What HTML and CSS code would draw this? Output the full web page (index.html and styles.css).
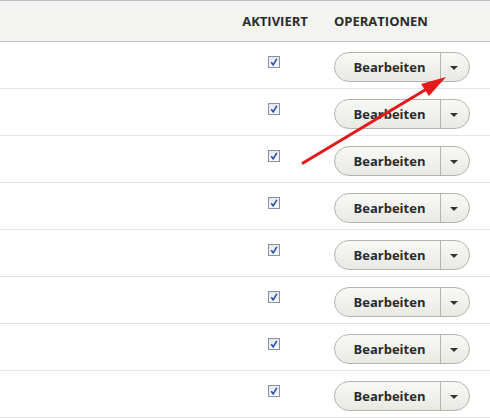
FILE: index.html
```html
<!DOCTYPE html>
<html>
<head>
<meta charset="utf-8">
<link rel="stylesheet" href="styles.css">
</head>
<body>
<div class="wrap">
<table class="list">
  <thead>
    <tr>
      <th class="c-name"></th>
      <th class="c-on">Aktiviert</th>
      <th class="c-ops">Operationen</th>
    </tr>
  </thead>
  <tbody>
    <tr><td class="c-name"></td><td class="c-on"><span class="cb"><svg viewBox="0 0 12 12" width="12" height="12"><path d="M3.2 6.2 L5.2 8.8 L8.8 2.8" fill="none" stroke="#2a4fa8" stroke-width="1.6"/></svg></span></td><td class="c-ops"><div class="drop"><span class="main">Bearbeiten</span><span class="tog"><i class="tri"></i></span></div></td></tr>
    <tr><td class="c-name"></td><td class="c-on"><span class="cb"><svg viewBox="0 0 12 12" width="12" height="12"><path d="M3.2 6.2 L5.2 8.8 L8.8 2.8" fill="none" stroke="#2a4fa8" stroke-width="1.6"/></svg></span></td><td class="c-ops"><div class="drop"><span class="main">Bearbeiten</span><span class="tog"><i class="tri"></i></span></div></td></tr>
    <tr><td class="c-name"></td><td class="c-on"><span class="cb"><svg viewBox="0 0 12 12" width="12" height="12"><path d="M3.2 6.2 L5.2 8.8 L8.8 2.8" fill="none" stroke="#2a4fa8" stroke-width="1.6"/></svg></span></td><td class="c-ops"><div class="drop"><span class="main">Bearbeiten</span><span class="tog"><i class="tri"></i></span></div></td></tr>
    <tr><td class="c-name"></td><td class="c-on"><span class="cb"><svg viewBox="0 0 12 12" width="12" height="12"><path d="M3.2 6.2 L5.2 8.8 L8.8 2.8" fill="none" stroke="#2a4fa8" stroke-width="1.6"/></svg></span></td><td class="c-ops"><div class="drop"><span class="main">Bearbeiten</span><span class="tog"><i class="tri"></i></span></div></td></tr>
    <tr><td class="c-name"></td><td class="c-on"><span class="cb"><svg viewBox="0 0 12 12" width="12" height="12"><path d="M3.2 6.2 L5.2 8.8 L8.8 2.8" fill="none" stroke="#2a4fa8" stroke-width="1.6"/></svg></span></td><td class="c-ops"><div class="drop"><span class="main">Bearbeiten</span><span class="tog"><i class="tri"></i></span></div></td></tr>
    <tr><td class="c-name"></td><td class="c-on"><span class="cb"><svg viewBox="0 0 12 12" width="12" height="12"><path d="M3.2 6.2 L5.2 8.8 L8.8 2.8" fill="none" stroke="#2a4fa8" stroke-width="1.6"/></svg></span></td><td class="c-ops"><div class="drop"><span class="main">Bearbeiten</span><span class="tog"><i class="tri"></i></span></div></td></tr>
    <tr><td class="c-name"></td><td class="c-on"><span class="cb"><svg viewBox="0 0 12 12" width="12" height="12"><path d="M3.2 6.2 L5.2 8.8 L8.8 2.8" fill="none" stroke="#2a4fa8" stroke-width="1.6"/></svg></span></td><td class="c-ops"><div class="drop"><span class="main">Bearbeiten</span><span class="tog"><i class="tri"></i></span></div></td></tr>
    <tr><td class="c-name"></td><td class="c-on"><span class="cb"><svg viewBox="0 0 12 12" width="12" height="12"><path d="M3.2 6.2 L5.2 8.8 L8.8 2.8" fill="none" stroke="#2a4fa8" stroke-width="1.6"/></svg></span></td><td class="c-ops"><div class="drop"><span class="main">Bearbeiten</span><span class="tog"><i class="tri"></i></span></div></td></tr>
  </tbody>
</table>
<svg class="arrow" width="490" height="418" viewBox="0 0 490 418">
  <line x1="303" y1="163" x2="430" y2="87" stroke="#e3191b" stroke-width="3" stroke-linecap="round"/>
  <polygon points="446,77 421,84 429,96" fill="#e3191b"/>
</svg>
</div>
</body>
</html>
```
FILE: styles.css
```css
html, body {
  margin: 0;
  padding: 0;
  background: #ffffff;
}
.wrap {
  position: relative;
  width: 490px;
  height: 418px;
  overflow: hidden;
}
.list {
  width: 490px;
  border-collapse: collapse;
  table-layout: fixed;
  font-family: "Open Sans", "Liberation Sans", sans-serif;
  color: #2b2b2b;
}
.list th {
  height: 40px;
  padding: 0;
  background: #f3f3f1;
  border-top: 1px solid #bdbdbd;
  border-bottom: 1px solid #c4c4c4;
  font-size: 13px;
  font-weight: 700;
  text-transform: uppercase;
  text-align: left;
  vertical-align: middle;
}
.list th.c-on { text-align: center; }
.c-name { width: 230px; }
.c-on { width: 90px; text-align: center; }
.c-ops { width: 170px; }
.list th.c-ops,
.list td.c-ops { padding-left: 14px; }
.list td {
  height: 46px;
  padding: 0;
  border-bottom: 1px solid #e4e4e4;
  vertical-align: middle;
}
.list td.c-on { vertical-align: top; }
.cb {
  display: inline-block;
  width: 12px;
  height: 12px;
  margin-top: 14px;
  margin-left: -2px;
  box-sizing: border-box;
  border: 1px solid #8a90a0;
  background: linear-gradient(#e3e8f4, #f6f8fc);
  position: relative;
}
.cb svg {
  position: absolute;
  left: -1px;
  top: -1px;
}
.drop {
  display: flex;
  width: 136px;
  height: 30px;
  box-sizing: border-box;
  border: 1px solid #b4b4b0;
  border-radius: 15px;
  background: linear-gradient(#f8f8f5, #e9e9e4);
  margin-top: 4px;
}
.main {
  flex: 1;
  display: flex;
  align-items: center;
  justify-content: center;
  font-size: 13px;
  font-weight: 700;
  color: #2b2b2b;
  padding-left: 4px;
}
.tog {
  width: 26px;
  border-left: 1px solid #b4b4b0;
  display: flex;
  align-items: center;
  justify-content: center;
  padding-right: 2px;
}
.tri {
  display: block;
  width: 0;
  height: 0;
  margin-top: 1px;
  border-left: 4px solid transparent;
  border-right: 4px solid transparent;
  border-top: 4px solid #333333;
}
.arrow {
  position: absolute;
  left: 0;
  top: 0;
  pointer-events: none;
}
```
